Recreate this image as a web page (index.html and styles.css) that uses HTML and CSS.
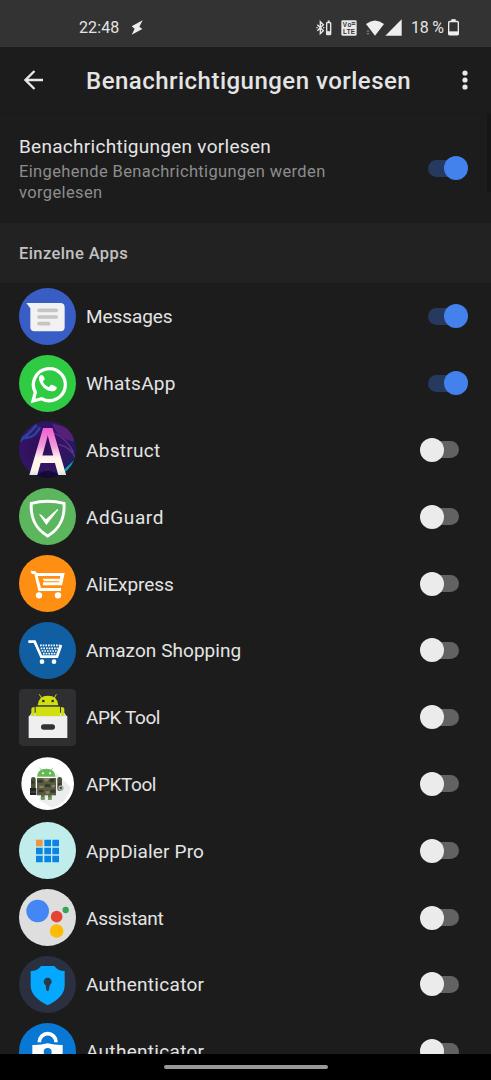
FILE: index.html
```html
<!DOCTYPE html>
<html lang="de">

<head>
    <meta charset="UTF-8">
    <meta name="viewport" content="width=device-width, initial-scale=1.0">
    <title>Benachrichtigungen vorlesen</title>
    <link rel="stylesheet" href="styles.css">
</head>

<body>
    <div class="statusbar">
        <span class="clock">22:48</span>
        <svg class="bolt" width="12" height="15" viewBox="0 0 36 45"><path d="M35 1L2 19l9 7-9 18 32-17-9-7z" fill="#eee"/></svg>
        <div class="status-icons">
            <svg width="16" height="16" viewBox="0 0 48 48" fill="none" stroke="#e6e6e6" stroke-width="4.200">
                <path d="M4 14l18 18-9 9V5l9 9L4 32"/>
                <path d="M1 23h4M21 23h4"/>
                <rect x="32" y="8" width="12" height="36" rx="2"/>
                <path d="M35 4h6" stroke-width="5"/>
                <path d="M32 38h12" stroke-width="9"/>
            </svg>
            <svg class="volte" width="16" height="16" viewBox="0 0 48 48">
                <rect x="1" y="1" width="46" height="46" rx="4" fill="#e8e8e8"/>
                <text x="5" y="21" textLength="26">Vo</text>
                <path d="M32 8h11M32 13h11" stroke="#333" stroke-width="3"/>
                <text x="6" y="42" textLength="36">LTE</text>
            </svg>
            <svg class="wifi" width="19" height="16" viewBox="0 0 57 48">
                <path d="M3 12Q30-9 57 12L30 47z" fill="#eee"/>
                <path d="M4 35l5-6 5 6zM4 39h10l-5 6z" fill="#777"/>
            </svg>
            <svg width="17" height="17" viewBox="0 0 50 50"><path d="M49 1v48H1z" fill="#eee"/></svg>
            <span class="percent">18 %</span>
            <svg width="11" height="17" viewBox="0 0 33 50" fill="none">
                <path d="M10 3h13" stroke="#eee" stroke-width="6"/>
                <rect x="2" y="7" width="29" height="40" rx="3" stroke="#eee" stroke-width="4"/>
                <path d="M2 42h29" stroke="#eee" stroke-width="11"/>
            </svg>
        </div>
    </div>

    <div class="appbar">
        <svg class="back" width="20" height="20" viewBox="0 0 20 20"><path d="M19 10H2M10.500 1L1.500 10l9 9" fill="none" stroke="#e8e8e8" stroke-width="2.300"/></svg>
        <h1>Benachrichtigungen vorlesen</h1>
        <svg class="more" width="6" height="20" viewBox="0 0 6 20" fill="#e8e8e8"><circle cx="3" cy="3" r="2.600"/><circle cx="3" cy="10" r="2.600"/><circle cx="3" cy="17" r="2.600"/></svg>
    </div>

    <div class="content">
        <div class="main-setting">
            <div>
                <div class="setting-title">Benachrichtigungen vorlesen</div>
                <div class="setting-text">Eingehende Benachrichtigungen werden<br>vorgelesen</div>
            </div>
            <span class="switch on"></span>
            <span class="scrollbar"></span>
        </div>

        <h2>Einzelne Apps</h2>

        <ul class="apps">
            <li>
                <svg class="icon" viewBox="0 0 171 171">
                    <circle cx="85.500" cy="85.500" r="85.500" fill="#385dc5"/>
                    <path d="M22 45h102q13 0 13 13v59q0 13-13 13H47q-13 0-13-13V61z" fill="#f2f2f2"/>
                    <path d="M60 67h52M60 87h52M60 107h29" stroke="#c5c5c5" stroke-width="11" stroke-linecap="round"/>
                </svg>
                <span class="name">Messages</span>
                <span class="switch on"></span>
            </li>
            <li>
                <svg class="icon" viewBox="0 0 171 171">
                    <circle cx="85.500" cy="85.500" r="85.500" fill="#2fcb43"/>
                    <path d="M42 138l7-26A48 48 0 1 1 68 131z" fill="none" stroke="#fff" stroke-width="10"/>
                    <path d="M68 60c-5-1-9 6-8 13 3 18 22 37 40 36 8 0 14-6 13-12-1-3-13-8-16-8-4 0-5 8-9 7-7-3-13-9-16-15-1-4 6-6 5-9-1-4-4-12-9-12z" fill="#fff"/>
                </svg>
                <span class="name wide">WhatsApp</span>
                <span class="switch on"></span>
            </li>
            <li>
                <svg class="icon" viewBox="0 0 171 171">
                    <defs>
                        <radialGradient id="sky" cx="0.400" cy="0.450" r="0.650"><stop offset="0" stop-color="#2a1053"/><stop offset="0.600" stop-color="#341365"/><stop offset="1" stop-color="#182058"/></radialGradient>
                        <linearGradient id="letter" x1="0" y1="0" x2="0" y2="1"><stop offset="0.200" stop-color="#f05bcf"/><stop offset="0.450" stop-color="#f39bdb"/><stop offset="0.600" stop-color="#fff5ee"/><stop offset="0.750" stop-color="#fff4e4"/><stop offset="0.850" stop-color="#c6dff2"/></linearGradient>
                        <clipPath id="round"><circle cx="85.500" cy="85.500" r="85.500"/></clipPath>
                    </defs>
                    <g clip-path="url(#round)">
                        <rect width="171" height="171" fill="url(#sky)"/>
                        <path d="M0 61q25-17 53-49M8 48q35 11 55-30" fill="none" stroke="#2b55bb" stroke-width="8" opacity="0.700"/>
                        <path d="M100 7q15 49 66 55l-10-38z" fill="#542078"/>
                        <path d="M119 70q40 10 52 45M105 36q37 16 59 58" fill="none" stroke="#68308d" stroke-width="4"/>
                        <path d="M138 143l30-28v25l-30 23z" fill="#159bc5"/>
                        <path d="M50 165q35-30 75 0v10H50z" fill="#120b35"/>
                    </g>
                    <text class="logo-letter" transform="translate(86 161) scale(0.790 1)" text-anchor="middle" fill="url(#letter)">A</text>
                </svg>
                <span class="name wide">Abstruct</span>
                <span class="switch"></span>
            </li>
            <li>
                <svg class="icon" viewBox="0 0 171 171">
                    <circle cx="85.500" cy="85.500" r="85.500" fill="#5bb65e"/>
                    <path d="M37 46Q86 34 135 46C138 88 121 124 86 144 51 124 34 88 37 46z" fill="none" stroke="#fff" stroke-width="9"/>
                    <path d="M60 79q6-2 10 4l11 11 34-31 3 2-36 46z" fill="#fff"/>
                </svg>
                <span class="name wider">AdGuard</span>
                <span class="switch"></span>
            </li>
            <li>
                <svg class="icon" viewBox="0 0 171 171">
                    <circle cx="85.500" cy="85.500" r="85.500" fill="#ff8f12"/>
                    <path d="M35 47l15 2 3 5h84l-8 37H72v-9h48l4-19H56l10 36h60v9H58L46 57h-8z" fill="#fff"/>
                    <path d="M70 71h52v8H76z" fill="#fff"/>
                    <circle cx="60" cy="121" r="9.500" fill="#fff"/><circle cx="117" cy="121" r="9.500" fill="#fff"/>
                </svg>
                <span class="name">AliExpress</span>
                <span class="switch"></span>
            </li>
            <li>
                <svg class="icon" viewBox="0 0 171 171">
                    <circle cx="85.500" cy="85.500" r="85.500" fill="#115fa3"/>
                    <path d="M28 59h19l20 45h47l12-35" fill="none" stroke="#fff" stroke-width="8"/>
                    <path d="M63 70h59M65 79h54M68 87h47M72 95h41" fill="none" stroke="#fff" stroke-width="5" stroke-dasharray="5 3"/>
                    <circle cx="69" cy="119" r="7" fill="#fff"/><circle cx="105" cy="119" r="7" fill="#fff"/>
                </svg>
                <span class="name amazon">Amazon Shopping</span>
                <span class="switch"></span>
            </li>
            <li>
                <svg class="icon" viewBox="0 0 171 171">
                    <rect width="171" height="171" rx="13" fill="#2f2f31"/>
                    <path d="M29 84l9-13h98l9 13z" fill="#ddd"/>
                    <g fill="#d1de12">
                        <path d="M56 49q2-29 31-29t31 29z"/>
                        <path d="M50 53h73v30H50z"/>
                        <path d="M37 81V61q0-7 10-7v27zM126 81V54q10 0 10 7v20z"/>
                        <path d="M68 27l-7-11M106 27l6-11" stroke="#d1de12" stroke-width="3"/>
                    </g>
                    <circle cx="73" cy="36" r="4" fill="#2f2f31"/><circle cx="101" cy="36" r="4" fill="#2f2f31"/>
                    <path d="M29 82h116v65H29z" fill="#efefef"/>
                    <rect x="66" y="106" width="42" height="16" rx="8" fill="#333"/>
                </svg>
                <span class="name tight">APK Tool</span>
                <span class="switch"></span>
            </li>
            <li>
                <svg class="icon" viewBox="0 0 171 171">
                    <circle cx="86" cy="86" r="79" fill="#fff"/>
                    <path d="M112 54l43 43q-9 45-54 62l-42-24z" fill="#eceeee"/>
                    <path d="M54 65q1-24 28-24t27 24z" fill="#67b958"/>
                    <path d="M68 46l-6-8M96 46l6-8" stroke="#67b958" stroke-width="2"/>
                    <circle cx="72" cy="55" r="3" fill="#fff"/><circle cx="93" cy="55" r="3" fill="#fff"/>
                    <path d="M54 69h57v52H54z" fill="#5b5a42"/>
                    <rect x="36" y="66" width="14" height="42" rx="7" fill="#4a5038"/><rect x="115" y="66" width="14" height="42" rx="7" fill="#4a5038"/>
                    <path d="M66 120h11v14H66zM87 120h11v14H87z" fill="#63704a"/>
                    <path d="M56 75h15v8H56zM78 88h16v8H78zM92 72h14v10H92zM59 104h15v8H59zM94 104h15v9H94zM37 78h9v8h-9zM117 84h10v7h-10z" fill="#303c2b"/>
                    <path d="M70 69h25l-13 12zM61 92h13v7H61zM80 109h11v7H80zM98 90h10v7H98z" fill="#8b8065"/>
                    <path d="M65 127h12v5H65zM87 127h12v5H87z" fill="#62a557"/>
                    <path d="M33 99h19v21H33z" fill="#222"/><path d="M35 111h16" stroke="#687073" stroke-width="2"/>
                    <circle cx="126" cy="99" r="6" fill="none" stroke="#aaa" stroke-width="4"/>
                </svg>
                <span class="name tight">APKTool</span>
                <span class="switch"></span>
            </li>
            <li>
                <svg class="icon" viewBox="0 0 171 171">
                    <circle cx="85.500" cy="85.500" r="85.500" fill="#c1ecec"/>
                    <path d="M76 53h20v20H76zM100 53h20v20h-20zM51 77h20v20H51zM76 77h20v20H76zM100 77h20v20h-20zM51 101h20v20H51zM76 101h20v20H76zM100 101h20v20h-20z" fill="#0b84e3"/>
                    <path d="M51 53h20v20H51z" fill="#ee963f"/>
                </svg>
                <span class="name dialer">AppDialer Pro</span>
                <span class="switch"></span>
            </li>
            <li>
                <svg class="icon" viewBox="0 0 171 171">
                    <circle cx="85.500" cy="85.500" r="85.500" fill="#dedede"/>
                    <circle cx="56" cy="66" r="34" fill="#4487f4"/><circle cx="113" cy="83" r="17.500" fill="#e54335"/>
                    <circle cx="140" cy="63" r="9.500" fill="#37a454"/><circle cx="113" cy="126" r="20.500" fill="#fbbb06"/>
                </svg>
                <span class="name assistant">Assistant</span>
                <span class="switch"></span>
            </li>
            <li>
                <svg class="icon" viewBox="0 0 171 171">
                    <circle cx="85.500" cy="85.500" r="85.500" fill="#2b3041"/>
                    <path d="M35 45q20 1 31-15h40q11 16 31 15v44q0 33-51 59-51-26-51-59z" fill="#05a8ff"/>
                    <path d="M80 88a12 12 0 1 1 12 0l-2 14q-4 6-8 0z" fill="#253a4a"/>
                </svg>
                <span class="name wide">Authenticator</span>
                <span class="switch"></span>
            </li>
            <li>
                <svg class="icon" viewBox="0 0 171 171">
                    <circle cx="85.500" cy="85.500" r="85.500" fill="#0878d4"/>
                    <path d="M61 58v-1a25 25 0 0 1 50 0v1" fill="none" stroke="#fff" stroke-width="11"/>
                    <path d="M40 66q24 1 46-5 22 6 45 5v42q-10 25-45 38-35-13-46-38z" fill="#fff"/>
                    <circle cx="86" cy="87" r="12" fill="#0878d4"/>
                </svg>
                <span class="name wide">Authenticator</span>
                <span class="switch"></span>
            </li>
        </ul>
    </div>

    <div class="navbar"><span></span></div>
</body>

</html>
```
FILE: styles.css
```css
* {
    box-sizing: border-box;
}

body {
    display: flex;
    flex-direction: column;
    height: 1080px;
    margin: 0;
    overflow: hidden;
    background: #1c1c1c;
    color: #e4e4e4;
    font-family: Roboto, "Open Sans", sans-serif;
}

svg {
    display: block;
    flex: none;
}

.statusbar {
    display: flex;
    align-items: center;
    flex: none;
    height: 47px;
    padding: 8px 32px 0 79px;
    background: #333;
    font-size: 16px;
}

.clock {
    width: 41px;
    letter-spacing: 0.100px;
}

.bolt {
    margin-left: 11px;
}

.status-icons {
    display: flex;
    align-items: center;
    margin-left: auto;
}

.volte {
    margin-left: 9px;
}

.volte text {
    font: bold 19px "Liberation Sans", sans-serif;
    fill: #333;
}

.wifi {
    margin-left: 8px;
    margin-right: 1px;
}

.percent {
    width: 32px;
    margin: 0 5px 0 9px;
    letter-spacing: -0.200px;
    white-space: nowrap;
}

.appbar {
    display: flex;
    align-items: center;
    flex: none;
    height: 67px;
    padding: 0 23px 0 24px;
    border-bottom: 1px solid #191919;
}

h1 {
    flex: 1;
    margin: 2px 0 0 42px;
    font-size: 24px;
    font-weight: 500;
    line-height: 32px;
    letter-spacing: 0.480px;
    white-space: nowrap;
}

.content {
    flex: 1;
    min-height: 0;
    overflow: hidden;
}

.main-setting {
    position: relative;
    display: flex;
    justify-content: space-between;
    height: 109px;
    padding: 22px 23px 0 19px;
}

.main-setting .switch {
    margin-top: 20px;
}

.setting-title {
    font-size: 19px;
    line-height: 22px;
    letter-spacing: 0.280px;
}

.setting-text {
    margin-top: 3px;
    color: #8d8d8d;
    font-size: 16.500px;
    line-height: 21px;
    letter-spacing: 0.360px;
}

.scrollbar {
    position: absolute;
    top: 0;
    right: 0;
    width: 4px;
    height: 78px;
    background: #161616;
}

h2 {
    height: 60px;
    margin: 0;
    padding: 1px 0 0 19px;
    background: #222;
    color: #c2c2c2;
    font-size: 16.500px;
    font-weight: 500;
    line-height: 60px;
    letter-spacing: 0.400px;
}

.apps {
    margin: 0;
    padding: 0;
    list-style: none;
}

.apps li {
    display: flex;
    align-items: center;
    height: 66.800px;
    padding: 0 23px 0 19px;
}

.icon {
    width: 57px;
    height: 57px;
}

.logo-letter {
    font: bold 208px "Liberation Sans", sans-serif;
}

.name {
    margin-left: 10px;
    padding-top: 1px;
    font-size: 19px;
    letter-spacing: -0.080px;
}

.name.wide {
    letter-spacing: 0.300px;
}

.name.wider {
    letter-spacing: 0.600px;
}

.name.tight {
    letter-spacing: -0.420px;
}

.name.amazon {
    letter-spacing: 0.060px;
}

.name.dialer {
    letter-spacing: 0.150px;
}

.name.assistant {
    letter-spacing: -0.250px;
}

.apps .switch {
    margin-left: auto;
}

/* the thumb sticks out of the track on its active side */
.switch {
    position: relative;
    display: flex;
    align-items: center;
    flex: none;
    width: 40px;
    height: 24px;
    margin-right: 9px;
}

.switch::before {
    content: "";
    width: 31px;
    height: 17px;
    margin-left: 9px;
    border-radius: 9px;
    background: #626262;
}

.switch::after {
    content: "";
    position: absolute;
    left: 0.500px;
    width: 24px;
    height: 24px;
    border-radius: 50%;
    background: #ebebeb;
}

.switch.on {
    margin-right: 0;
}

.switch.on::before {
    margin-left: 0;
    background: #263a60;
}

.switch.on::after {
    left: 16px;
    background: #4382ec;
}

.navbar {
    display: flex;
    justify-content: center;
    flex: none;
    height: 26px;
    padding-top: 11px;
    background: #000;
}

.navbar span {
    width: 164px;
    height: 4px;
    border-radius: 2px;
    background: #999;
}
```
